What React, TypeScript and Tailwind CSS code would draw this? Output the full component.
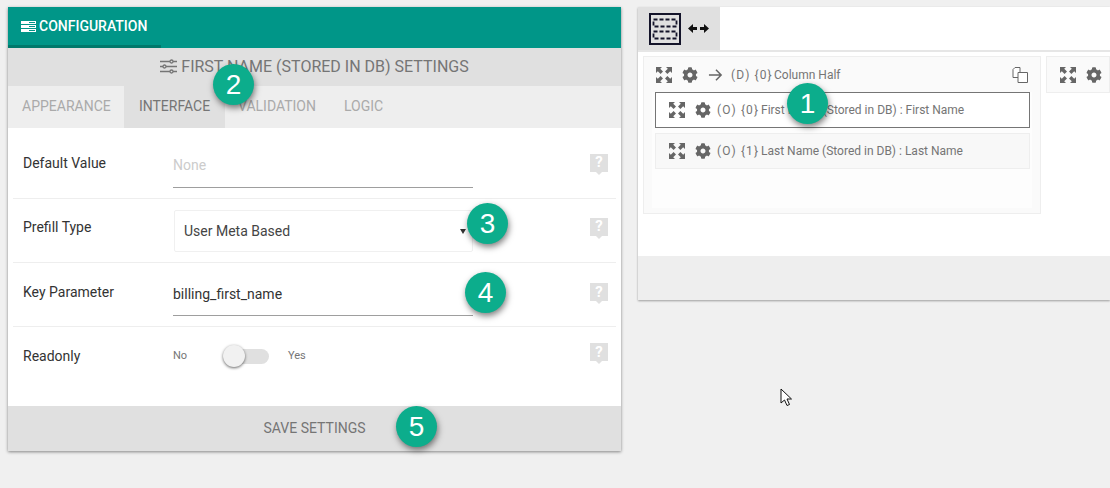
import { FaCog } from "react-icons/fa";

function ExpandIcon({ className }: { className?: string }) {
    return (
        <svg viewBox="0 0 16 16" className={className} fill="currentColor">
            <path d="M0 0h6L4.2 1.8 7 4.6 4.6 7 1.8 4.2 0 6z" />
            <path d="M16 0v6l-1.8-1.8L11.4 7 9 4.6l2.8-2.8L10 0z" />
            <path d="M0 16v-6l1.8 1.8L4.6 9 7 11.4l-2.8 2.8L6 16z" />
            <path d="M16 16h-6l1.8-1.8L9 11.4 11.4 9l2.8 2.8L16 10z" />
        </svg>
    );
}

function HelpIcon() {
    return (
        <div className="relative flex h-[18px] w-[18px] items-center justify-center bg-[#e0e0e0] text-[15px] font-bold leading-none text-white">
            ?
            <span className="absolute -bottom-[3px] left-[6px] h-0 w-0 border-x-[3px] border-t-[3px] border-x-transparent border-t-[#e0e0e0]" />
        </div>
    );
}

function Badge({ n, className }: { n: number; className: string }) {
    return (
        <div className={`absolute z-10 flex h-[41px] w-[41px] items-center justify-center rounded-full bg-[#0cad8c] text-[28px] leading-none text-white shadow-[1px_3px_6px_rgba(0,0,0,0.5)] font-['Liberation_Sans',sans-serif] ${className}`}>
            {n}
        </div>
    );
}

function SettingRow({ label, children, h, labelTop, helpTop, last }: { label: string; children: React.ReactNode; h: string; labelTop: string; helpTop: string; last?: boolean }) {
    return (
        <div className={`mx-[5px] flex items-start pl-[10px] pr-[8px] ${h} ${last ? "" : "border-b border-[#eeeeee]"}`}>
            <div className={`w-[150px] text-[14px] leading-[20px] text-[#333] ${labelTop}`}>{label}</div>
            <div className="w-[300px]">{children}</div>
            <div className={`ml-auto ${helpTop}`}>
                <HelpIcon />
            </div>
        </div>
    );
}

function ConfigPanel() {
    return (
        <div className="flex h-[444px] w-[613px] flex-col bg-white shadow-[0_1px_3px_rgba(0,0,0,0.45)]">
            <div className="h-[41px] bg-[#009688]">
                <div className="flex h-[41px] w-[153px] items-center gap-[3px] border-b-[3px] border-[#00796b] pl-[13px] text-[14px] font-medium text-white">
                    <svg viewBox="0 0 15 11" className="h-[11px] w-[15px]" fill="currentColor">
                        <path d="M0 0h15v3H0zM0 4h15v3H0zM0 8h15v3H0z" />
                        <path d="M8 1h6v1H8zM8 5h6v1H8zM8 9h6v1H8z" fill="#009688" />
                    </svg>
                    CONFIGURATION
                </div>
            </div>
            <div className="flex h-[38px] items-center justify-center gap-[4px] bg-[#e0e0e0] text-[16px] text-[#757575]">
                <svg viewBox="0 0 17 15" className="h-[15px] w-[17px]" fill="none" stroke="currentColor" strokeWidth="1.3">
                    <path d="M0 2.5h10M13 2.5h4M0 7.5h3M6 7.5h11M0 12.5h10M13 12.5h4" />
                    <circle cx="11.5" cy="2.5" r="1.5" />
                    <circle cx="4.5" cy="7.5" r="1.5" />
                    <circle cx="11.5" cy="12.5" r="1.5" />
                </svg>
                FIRST NAME (STORED IN DB) SETTINGS
            </div>
            <div className="flex h-[42px] bg-[#eeeeee] text-[14px] text-[#aaaaaa]">
                <div className="flex w-[116px] items-center pl-[14px]">APPEARANCE</div>
                <div className="flex w-[101px] items-center justify-center bg-[#e0e0e0] text-[#757575]">INTERFACE</div>
                <div className="flex w-[119px] items-center pl-[13px]">VALIDATION</div>
                <div className="flex items-center">LOGIC</div>
            </div>
            <SettingRow label="Default Value" h="h-[71px]" labelTop="pt-[25px]" helpTop="pt-[26px]">
                <div className="mt-[17px] flex h-[43px] items-center border-b border-[#9e9e9e] text-[14px] text-[#cccccc]">None</div>
            </SettingRow>
            <SettingRow label="Prefill Type" h="h-[65px]" labelTop="pt-[18px]" helpTop="pt-[19px]">
                <div className="mt-[11px] ml-[1px] flex h-[42px] items-center justify-between rounded-[2px] border border-[#f0f0f0] pl-[9px] pt-[2px] text-[14px] text-[#444]">
                    User Meta Based
                    <span className="mr-[6px] h-0 w-0 border-x-[3px] border-t-[5px] border-x-transparent border-t-[#333]" />
                </div>
            </SettingRow>
            <SettingRow label="Key Parameter" h="h-[64px]" labelTop="pt-[19px]" helpTop="pt-[20px]">
                <div className="mt-[10px] flex h-[43px] items-center border-b border-[#9e9e9e] text-[14px] text-[#333]">billing_first_name</div>
            </SettingRow>
            <SettingRow label="Readonly" h="h-[79px]" labelTop="pt-[19px]" helpTop="pt-[16px]" last>
                <div className="mt-[19px] flex h-[20px] items-center text-[11px] text-[#757575]">
                    <span className="w-[50px]">No</span>
                    <span className="relative h-[15px] w-[46px] rounded-full bg-[#e0e0e0]">
                        <span className="absolute -top-[4px] left-0 h-[22px] w-[22px] rounded-full bg-[#f1f1f1] shadow-[0_1px_3px_rgba(0,0,0,0.6)]" />
                    </span>
                    <span className="ml-[19px]">Yes</span>
                </div>
            </SettingRow>
            <div className="flex h-[45px] items-center justify-center bg-[#e0e0e0] text-[14px] text-[#757575]">SAVE SETTINGS</div>
        </div>
    );
}

function FieldRow({ prefix, text, active }: { prefix: string; text: string; active?: boolean }) {
    return (
        <div className={`flex h-[36px] items-center pl-[13px] text-[12px] text-[#757575] ${active ? "border border-[#757575] bg-white" : "border border-[#eeeeee] bg-[#f8f8f8]"}`}>
            <ExpandIcon className="h-[16px] w-[16px] text-[#666]" />
            <FaCog className="ml-[10px] h-[16px] w-[16px] text-[#666]" />
            <span className="ml-[6px] w-[44px] tracking-[1.1px]">{prefix}</span>
            <span>{text}</span>
        </div>
    );
}

function BuilderPanel() {
    return (
        <div className="flex h-[293px] w-[472px] flex-col overflow-hidden bg-white shadow-[0_1px_2px_rgba(0,0,0,0.35)]">
            <div className="h-[45px] border-b-[2px] border-[#e6e6e6]">
                <div className="flex h-[43px] w-[82px] items-center gap-[7px] bg-[#e0e0e0] pl-[11px]">
                    <svg viewBox="0 0 32 32" className="h-[32px] w-[32px]" fill="none" stroke="#14142a">
                        <rect x="1" y="1" width="30" height="30" strokeWidth="2" />
                        <path d="M4.5 6.5h23v7h-23zM4.5 18.5h23v7h-23z" strokeWidth="1.8" strokeDasharray="4 2" />
                    </svg>
                    <svg viewBox="0 0 21 9" className="h-[9px] w-[21px]" fill="#111">
                        <path d="M0 4.5L5 0v3h4v3H5v3zM21 4.5L16 0v3h-4v3h4v3z" />
                    </svg>
                </div>
            </div>
            <div className="flex flex-1 gap-[5px] pl-[5px] pt-[4px]">
                <div className="h-[158px] w-[398px] shrink-0 border border-[#eeeeee] bg-[#fafafa]">
                    <div className="flex h-[35px] items-center pl-[12px] pr-[12px] text-[12px] text-[#757575]">
                        <ExpandIcon className="h-[16px] w-[16px] text-[#666]" />
                        <FaCog className="ml-[10px] h-[16px] w-[16px] text-[#666]" />
                        <svg viewBox="0 0 16 14" className="ml-[10px] h-[14px] w-[15px]" fill="none" stroke="#666" strokeWidth="1.6">
                            <path d="M1 7h13M8.5 1.5L14 7l-5.5 5.5" />
                        </svg>
                        <span className="ml-[8px] w-[43px] tracking-[1.1px]">(D) {"{0}"}</span>
                        <span>Column Half</span>
                        <svg viewBox="0 0 16 16" className="ml-auto h-[16px] w-[16px]" fill="#fff" stroke="#666" strokeWidth="1">
                            <path d="M1 2.5L3 .5h5v10H1z" />
                            <path d="M6 5.5h9.5v10H6z" />
                        </svg>
                    </div>
                    <div className="mx-[8px] flex h-[116px] flex-col gap-[5px] bg-[#fdfdfd] pl-[3px] pr-[2px]">
                        <FieldRow active prefix={"(O) {0}"} text="First Name (Stored in DB) : First Name" />
                        <FieldRow prefix={"(O) {1}"} text="Last Name (Stored in DB) : Last Name" />
                    </div>
                </div>
                <div className="flex h-[37px] flex-1 items-center gap-[10px] border border-[#eeeeee] bg-[#fafafa] pl-[13px]">
                    <ExpandIcon className="h-[16px] w-[16px] shrink-0 text-[#666]" />
                    <FaCog className="h-[16px] w-[16px] shrink-0 text-[#666]" />
                </div>
            </div>
            <div className="h-[44px] bg-[#eeeeee]" />
        </div>
    );
}

export default function App() {
    return (
        <div className="relative flex h-[488px] w-[1110px] gap-[17px] overflow-hidden bg-[#f0f0f0] pl-[8px] pt-[7px] font-['Roboto',sans-serif]">
            <ConfigPanel />
            <BuilderPanel />
            <Badge n={1} className="left-[787px] top-[83px]" />
            <Badge n={2} className="left-[213px] top-[64px]" />
            <Badge n={3} className="left-[467px] top-[203px]" />
            <Badge n={4} className="left-[465px] top-[272px]" />
            <Badge n={5} className="left-[396px] top-[406px]" />
            <svg viewBox="0 0 13 19" className="absolute left-[780px] top-[388px] h-[19px] w-[13px]" fill="#fff" stroke="#111" strokeWidth="1">
                <path d="M1 1v14l3.5-3 2.5 5.5 2.5-1-2.5-5.5h4.5z" />
            </svg>
        </div>
    );
}
